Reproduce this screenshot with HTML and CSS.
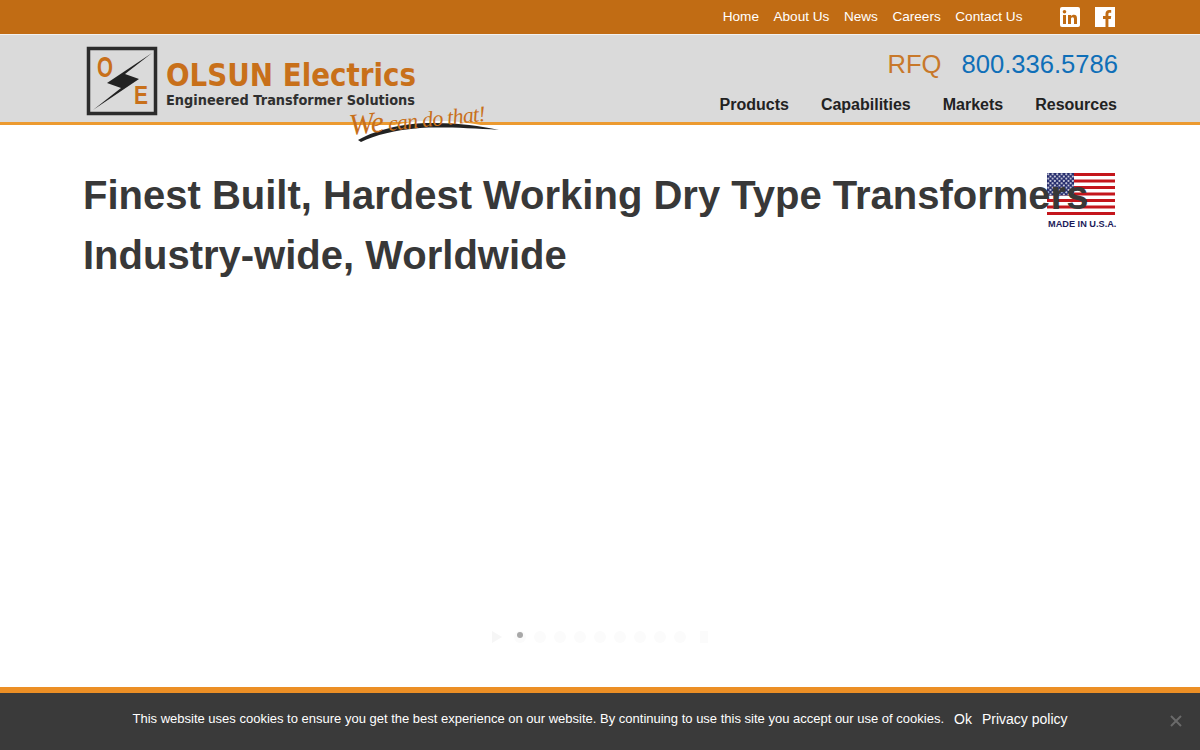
FILE: index.html
```html
<!DOCTYPE html>
<html lang="en">
<head>
    <meta charset="UTF-8">
    <title>Olsun Electrics</title>
    <link rel="stylesheet" href="styles.css">
</head>
<body>
    <!-- Top bar -->
    <div class="topbar">
        <div class="topbar-inner">
            <a href="#">Home</a>
            <a href="#">About Us</a>
            <a href="#">News</a>
            <a href="#">Careers</a>
            <a href="#">Contact Us</a>
            <div class="social">
                <svg width="20" height="20" viewBox="0 0 20 20"><rect width="20" height="20" rx="2" fill="#fff"/><rect x="3" y="8" width="3" height="9" fill="#c16c14"/><circle cx="4.5" cy="4.8" r="1.8" fill="#c16c14"/><path d="M8 8h3v1.3c.6-1 1.7-1.5 2.9-1.5 2.4 0 3.1 1.5 3.1 3.9V17h-3v-4.7c0-1.200-.3-2-1.400-2-1.200 0-1.600.9-1.600 2V17H8z" fill="#c16c14"/></svg>
                <svg width="20" height="20" viewBox="0 0 20 20"><rect width="20" height="20" fill="#fff"/><path d="M10.500 20v-8H8V9h2.500V6.800C10.500 4.300 12 3 14.200 3c1 0 1.800.1 2 .1v2.700h-1.400c-1.200 0-1.400.6-1.400 1.400V9h2.800l-.4 3h-2.400v8z" fill="#c16c14"/></svg>
            </div>
        </div>
    </div>

    <!-- Header -->
    <header>
        <div class="header-inner">
            <svg class="logo" width="420" height="100" viewBox="0 0 420 100">
                <rect x="3.500" y="2.500" width="67" height="65" fill="none" stroke="#2b2b2b" stroke-width="3.500"/>
                <text x="12" y="31" class="logo-letter" textLength="16" lengthAdjust="spacingAndGlyphs">O</text>
                <text x="49" y="58" class="logo-letter logo-letter-e" textLength="14" lengthAdjust="spacingAndGlyphs">E</text>
                <path d="M67 7 L22 37 L36 42 L8 64 L54 33 L40 28 Z" fill="#222"/>
                <text x="81" y="40" class="logo-name" textLength="250" lengthAdjust="spacingAndGlyphs">OLSUN Electrics</text>
                <text x="81" y="59" class="logo-sub" textLength="249" lengthAdjust="spacingAndGlyphs">Engineered Transformer Solutions</text>
                <path d="M296 84 C320 73 360 72 402 80 L402 84 Z" fill="#fff"/>
                <path d="M273 94 C295 81 330 76 350 77 C375 77 395 80 414 84 C385 82 355 81 335 82 C310 84 290 89 276 96 Z" fill="#222"/>
                <text transform="translate(265 89) rotate(-6)" class="logo-tag" textLength="137" lengthAdjust="spacing"><tspan class="logo-tag-we">We</tspan> can do that!</text>
            </svg>
            <div class="header-right">
                <div class="phone"><span class="rfq">RFQ</span><span class="number">800.336.5786</span></div>
                <nav>
                    <a href="#">Products</a>
                    <a href="#">Capabilities</a>
                    <a href="#">Markets</a>
                    <a href="#">Resources</a>
                </nav>
            </div>
        </div>
    </header>

    <!-- Hero -->
    <main>
        <div class="flag">
            <svg width="68" height="42" viewBox="0 0 68 42">
                <defs>
                    <pattern id="stars" width="4.500" height="4.500" patternUnits="userSpaceOnUse">
                        <circle cx="1.200" cy="1.200" r="1" fill="#f0f0f6"/>
                        <circle cx="3.400" cy="3.400" r="1" fill="#f0f0f6"/>
                    </pattern>
                </defs>
                <rect width="68" height="42" fill="#fff"/>
                <g fill="#c4161c">
                    <rect y="0" width="68" height="3"/>
                    <rect y="6.500" width="68" height="3"/>
                    <rect y="13" width="68" height="3"/>
                    <rect y="19.500" width="68" height="3"/>
                    <rect y="26" width="68" height="3"/>
                    <rect y="32.500" width="68" height="3"/>
                    <rect y="39" width="68" height="3"/>
                </g>
                <rect width="27" height="22.500" fill="#232a6b"/>
                <rect width="27" height="22.500" fill="url(#stars)"/>
            </svg>
            <span>MADE IN U.S.A.</span>
        </div>
        <h1>Finest Built, Hardest Working Dry Type Transformers<br>Industry-wide, Worldwide</h1>
        <div class="slider-dots">
            <span class="arrow"></span>
            <span class="dot active"></span>
            <span class="dot"></span>
            <span class="dot"></span>
            <span class="dot"></span>
            <span class="dot"></span>
            <span class="dot"></span>
            <span class="dot"></span>
            <span class="dot"></span>
            <span class="dot"></span>
            <span class="pause"></span>
        </div>
    </main>

    <!-- Cookie notice -->
    <div class="cookie-bar">
        <span class="cookie-text">This website uses cookies to ensure you get the best experience on our website. By continuing to use this site you accept our use of cookies.</span>
        <a href="#" class="cookie-ok">Ok</a>
        <a href="#" class="cookie-policy">Privacy policy</a>
        <svg class="cookie-close" width="12" height="12" viewBox="0 0 12 12"><path d="M1 1l10 10M11 1L1 11" stroke="#6a6a6a" stroke-width="2"/></svg>
    </div>
</body>
</html>
```

FILE: styles.css
```css
body {
    font-family: "Liberation Sans", Arial, sans-serif;
    background-color: #fff;
    margin: 0;
    padding: 0;
    height: 750px;
    overflow: hidden;
    display: flex;
    flex-direction: column;
}

a {
    text-decoration: none;
}

.topbar {
    background-color: #c16c14;
    height: 34px;
    border-bottom: 1px solid #f1f1f1;
}

.topbar-inner {
    display: flex;
    justify-content: flex-end;
    align-items: center;
    height: 33px;
    padding-right: 85px;
}

.topbar-inner a {
    color: #fff;
    font-size: 13.600px;
    margin-left: 14.500px;
}

.social {
    display: flex;
    gap: 15px;
    margin-left: 37.500px;
}

header {
    background-color: #dadada;
    height: 87px;
    border-bottom: 3px solid #ec9a30;
}

.header-inner {
    position: relative;
    display: flex;
    justify-content: flex-end;
    height: 87px;
    padding-right: 82px;
}

.logo {
    position: absolute;
    left: 85px;
    top: 11px;
}

.logo-letter {
    font-family: "Liberation Sans", Arial, sans-serif;
    font-size: 30px;
    font-weight: bold;
    fill: #c8701a;
}

.logo-letter-e {
    font-size: 25px;
}

.logo-name {
    font-family: "DejaVu Sans", sans-serif;
    font-size: 32px;
    font-weight: bold;
    fill: #c8701a;
}

.logo-sub {
    font-family: "DejaVu Sans", sans-serif;
    font-size: 14px;
    font-weight: bold;
    fill: #2f2f2f;
}

.logo-tag {
    font-family: "Liberation Serif", serif;
    font-style: italic;
    font-size: 22px;
    fill: #c8701a;
}

.logo-tag-we {
    font-size: 30px;
}

.header-right {
    display: flex;
    flex-direction: column;
    align-items: flex-end;
}

.phone {
    font-size: 25.600px;
    margin-top: 15px;
    line-height: 29px;
}

.rfq {
    color: #c8782a;
    margin-right: 20px;
}

.number {
    color: #0f6fb8;
}

nav {
    display: flex;
    gap: 32px;
    margin-top: 17px;
    margin-right: 1px;
}

nav a {
    color: #222;
    font-size: 16px;
    font-weight: bold;
    line-height: 18px;
}

main {
    position: relative;
    flex: 1;
    padding: 40px 83px 0;
}

h1 {
    position: relative;
    margin: 0;
    color: #383838;
    font-size: 40px;
    line-height: 60px;
    font-weight: bold;
}

.flag {
    position: absolute;
    top: 48px;
    right: 85px;
    width: 68px;
}

.flag svg {
    display: block;
}

.flag span {
    display: block;
    margin-top: 4px;
    margin-left: 1px;
    color: #1c1c5a;
    font-size: 9.200px;
    font-weight: bold;
    white-space: nowrap;
}

.slider-dots {
    position: absolute;
    left: 492px;
    top: 506px;
    display: flex;
    align-items: center;
    gap: 8px;
}

.dot {
    width: 12px;
    height: 12px;
    border-radius: 50%;
    background-color: #fbfbfb;
    position: relative;
}

.dot.active::before {
    content: "";
    position: absolute;
    left: 3px;
    top: 1px;
    width: 6px;
    height: 6px;
    border-radius: 50%;
    background-color: #a8a8a8;
}

.arrow {
    width: 0;
    height: 0;
    margin-right: 4px;
    border-left: 10px solid #f6f6f6;
    border-top: 6px solid transparent;
    border-bottom: 6px solid transparent;
}

.pause {
    width: 8px;
    height: 12px;
    margin-left: 6px;
    background-color: #fbfbfb;
}

.cookie-bar {
    position: relative;
    background-color: #3a3a3a;
    border-top: 6px solid #ec8f25;
    height: 51px;
    padding-bottom: 6px;
    display: flex;
    justify-content: center;
    align-items: center;
    color: #fff;
}

.cookie-text {
    font-size: 13px;
}

.cookie-ok,
.cookie-policy {
    color: #fff;
    font-size: 14px;
}

.cookie-ok {
    margin-left: 10px;
}

.cookie-policy {
    margin-left: 10px;
}

.cookie-close {
    position: absolute;
    right: 18px;
    top: 22px;
}
```
